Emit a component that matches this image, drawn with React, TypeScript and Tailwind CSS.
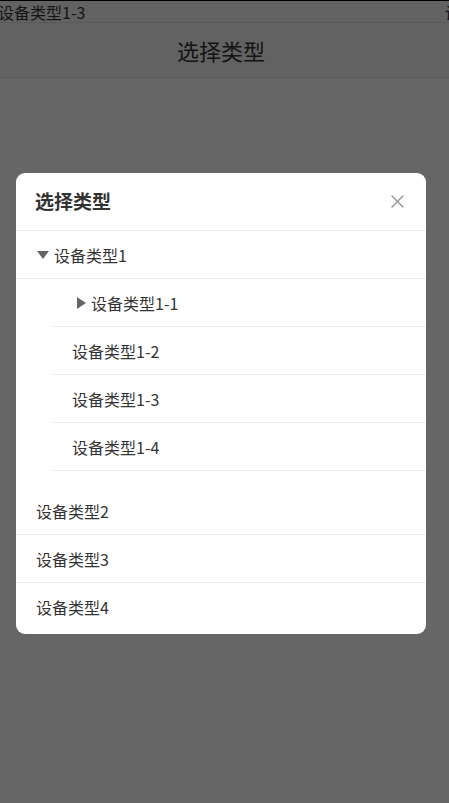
import type { ReactNode } from "react";

const font = { fontFamily: '"Noto Sans CJK SC", "Noto Sans", sans-serif' };

// ─── Triangles ────────────────────────────────────────────────────────────────
function CaretDown() {
  return (
    <svg viewBox="0 0 12 8" className="w-[12px] h-[8px] shrink-0" aria-hidden="true">
      <path d="M0 0 L12 0 L6 8 Z" fill="#666" />
    </svg>
  );
}

function CaretRight() {
  return (
    <svg viewBox="0 0 9 12" className="w-[9px] h-[12px] shrink-0" aria-hidden="true">
      <path d="M0 0 L9 6 L0 12 Z" fill="#666" />
    </svg>
  );
}

function CloseIcon() {
  return (
    <svg viewBox="0 0 12 12" className="w-[13px] h-[13px]" aria-hidden="true">
      <path d="M1 1 L11 11 M11 1 L1 11" stroke="#999" strokeWidth="1.4" strokeLinecap="round" />
    </svg>
  );
}

// ─── Row ──────────────────────────────────────────────────────────────────────
function Row({ children, className = "" }: { children: ReactNode; className?: string }) {
  return (
    <div className={"h-[48px] flex items-center border-b border-[#eeeeee] text-[16px] text-[#333] " + className}>
      {children}
    </div>
  );
}

export default function App() {
  return (
    <div className="relative w-full h-[803px] bg-white overflow-hidden" style={font}>
      {/* ── Page under the overlay ── */}
      <div className="border-t border-black">
        <div className="h-[22px] flex items-center justify-between bg-[#f5f5f5] border-b border-[#e0e0e0] text-[16px] text-[#333] leading-none">
          <span className="-ml-[2px]">设备类型1-3</span>
          <span className="-mr-[12px]">设</span>
        </div>
        <div className="h-[55px] flex items-center justify-center pr-[7px] bg-[#f5f5f5] border-b border-[#e0e0e0] text-[22px] text-[#333]">
          选择类型
        </div>
      </div>

      {/* ── Overlay ── */}
      <div className="absolute inset-0 bg-black/60" />

      {/* ── Modal ── */}
      <div className="absolute left-[16px] top-[173px] w-[410px] pb-[3px] bg-white rounded-[9px] overflow-hidden">
        <div className="h-[58px] flex items-center justify-between pl-[19px] pr-[22px] border-b border-[#eeeeee]">
          <span className="text-[19px] font-bold text-[#333]">选择类型</span>
          <CloseIcon />
        </div>

        <Row className="pl-[21px] gap-[5px]">
          <CaretDown />
          <span>设备类型1</span>
        </Row>

        <div className="ml-[36px] pb-[16px]">
          <Row className="pl-[25px] gap-[5px]">
            <CaretRight />
            <span>设备类型1-1</span>
          </Row>
          <Row className="pl-[20px]">设备类型1-2</Row>
          <Row className="pl-[20px]">设备类型1-3</Row>
          <Row className="pl-[20px]">设备类型1-4</Row>
        </div>

        <Row className="pl-[20px]">设备类型2</Row>
        <Row className="pl-[20px]">设备类型3</Row>
        <Row className="pl-[20px] border-b-0">设备类型4</Row>
      </div>
    </div>
  );
}
